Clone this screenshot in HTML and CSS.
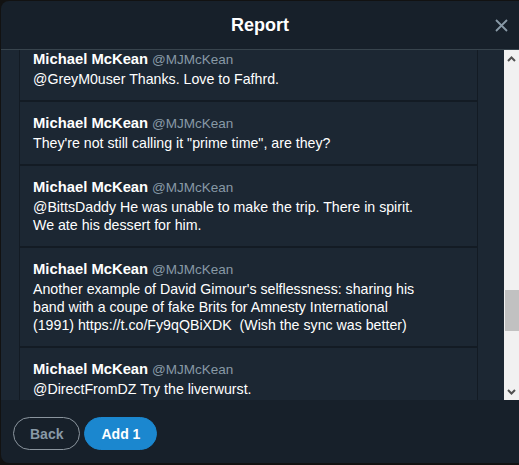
FILE: index.html
```html
<!DOCTYPE html>
<html lang="en">
<head>
<meta charset="utf-8">
<title>Report</title>
<link rel="stylesheet" href="styles.css">
</head>
<body>
<div class="modal">
  <header class="modal-header">
    <span class="spacer"></span>
    <h1 class="title">Report</h1>
    <button class="close" aria-label="Close">
      <svg width="13" height="13" viewBox="0 0 13 13"><path d="M1 1 L12 12 M12 1 L1 12" stroke="#8899a6" stroke-width="1.8" fill="none"/></svg>
    </button>
  </header>
  <div class="body">
    <div class="list" id="list">
      <div class="tweet">
        <div class="meta"><span class="name">Michael McKean</span> <span class="handle">@MJMcKean</span></div>
        <p class="text">@GreyM0user Thanks. Love to Fafhrd.</p>
      </div>
      <div class="tweet">
        <div class="meta"><span class="name">Michael McKean</span> <span class="handle">@MJMcKean</span></div>
        <p class="text">They're not still calling it "prime time", are they?</p>
      </div>
      <div class="tweet">
        <div class="meta"><span class="name">Michael McKean</span> <span class="handle">@MJMcKean</span></div>
        <p class="text">@BittsDaddy He was unable to make the trip. There in spirit.<br>We ate his dessert for him.</p>
      </div>
      <div class="tweet">
        <div class="meta"><span class="name">Michael McKean</span> <span class="handle">@MJMcKean</span></div>
        <p class="text">Another example of David Gimour's selflessness: sharing his<br>band with a coupe of fake Brits for Amnesty International<br>(1991) https://t.co/Fy9qQBiXDK &nbsp;(Wish the sync was better)</p>
      </div>
      <div class="tweet">
        <div class="meta"><span class="name">Michael McKean</span> <span class="handle">@MJMcKean</span></div>
        <p class="text">@DirectFromDZ Try the liverwurst.</p>
      </div>
    </div>
    <div class="scrollbar" aria-hidden="true">
      <div class="sb-btn">
        <svg width="15" height="17" viewBox="0 0 15 17"><path d="M4 11 L7.5 7.5 L11 11" stroke="#505050" stroke-width="2" fill="none"/></svg>
      </div>
      <div class="sb-track"><div class="sb-thumb"></div></div>
      <div class="sb-btn">
        <svg width="15" height="17" viewBox="0 0 15 17"><path d="M4 7 L7.5 10.5 L11 7" stroke="#505050" stroke-width="2" fill="none"/></svg>
      </div>
    </div>
  </div>
  <footer class="modal-footer">
    <button class="btn btn-back">Back</button>
    <button class="btn btn-add">Add 1</button>
  </footer>
</div>
<script src="script.js"></script>
</body>
</html>
```
FILE: styles.css
```css
html, body {
  margin: 0;
  padding: 0;
}
body {
  background: #121212;
  overflow: hidden;
  font-family: "Liberation Sans", Arial, sans-serif;
  color: #ffffff;
}
.modal {
  margin: 1px 0 0 1px;
  width: 518px;
  height: 462px;
  background: #17202a;
  border-radius: 8px 0 0 8px;
  display: flex;
  flex-direction: column;
  overflow: hidden;
}
.modal-header {
  height: 48px;
  border-bottom: 1px solid #38444d;
  display: grid;
  grid-template-columns: 1fr auto 1fr;
  align-items: center;
  flex: none;
}
.title {
  margin: 0;
  font-size: 18px;
  font-weight: bold;
  color: #ffffff;
}
.close {
  justify-self: end;
  background: none;
  border: 0;
  padding: 0 11px 0 0;
  display: flex;
  align-items: center;
}
.body {
  height: 350px;
  flex: none;
  display: flex;
  background: #1c2733;
}
.list {
  flex: 1;
  overflow: hidden;
  padding: 0 26px 0 18px;
}
.scrollbar {
  width: 15px;
  flex: none;
  display: flex;
  flex-direction: column;
  background: #f1f1f1;
}
.sb-btn {
  height: 17px;
  flex: none;
}
.sb-btn svg {
  display: block;
}
.sb-track {
  flex: 1;
  padding-left: 1px;
}
.sb-thumb {
  margin-top: 223px;
  height: 41px;
  background: #c1c1c1;
}
.tweet {
  background: #1c2733;
  border-left: 1px solid #131b24;
  border-right: 1px solid #131b24;
  border-top: 2px solid #131b24;
  padding: 11px 13px 12px;
  font-size: 14.2px;
  line-height: 18px;
}
.meta {
  white-space: nowrap;
  line-height: 20px;
}
.name {
  font-weight: bold;
  font-size: 14.8px;
  color: #ffffff;
}
.handle {
  font-size: 13.5px;
  color: #8899a6;
}
.text {
  margin: 0;
  color: #ffffff;
  white-space: nowrap;
}
.modal-footer {
  flex: 1;
  display: flex;
  align-items: flex-start;
  gap: 4px;
  padding: 17px 12px 0;
}
.btn {
  height: 33px;
  border-radius: 17px;
  padding: 0 16px;
  font-family: "Liberation Sans", Arial, sans-serif;
  font-size: 14px;
  font-weight: bold;
  cursor: pointer;
}
.btn-back {
  background: transparent;
  border: 1px solid #8b959e;
  color: #8899a6;
}
.btn-add {
  background: #1b87cf;
  border: 1px solid #1b87cf;
  color: #ffffff;
}
```
FILE: script.js
```js
document.getElementById('list').scrollTop = 14;
```
